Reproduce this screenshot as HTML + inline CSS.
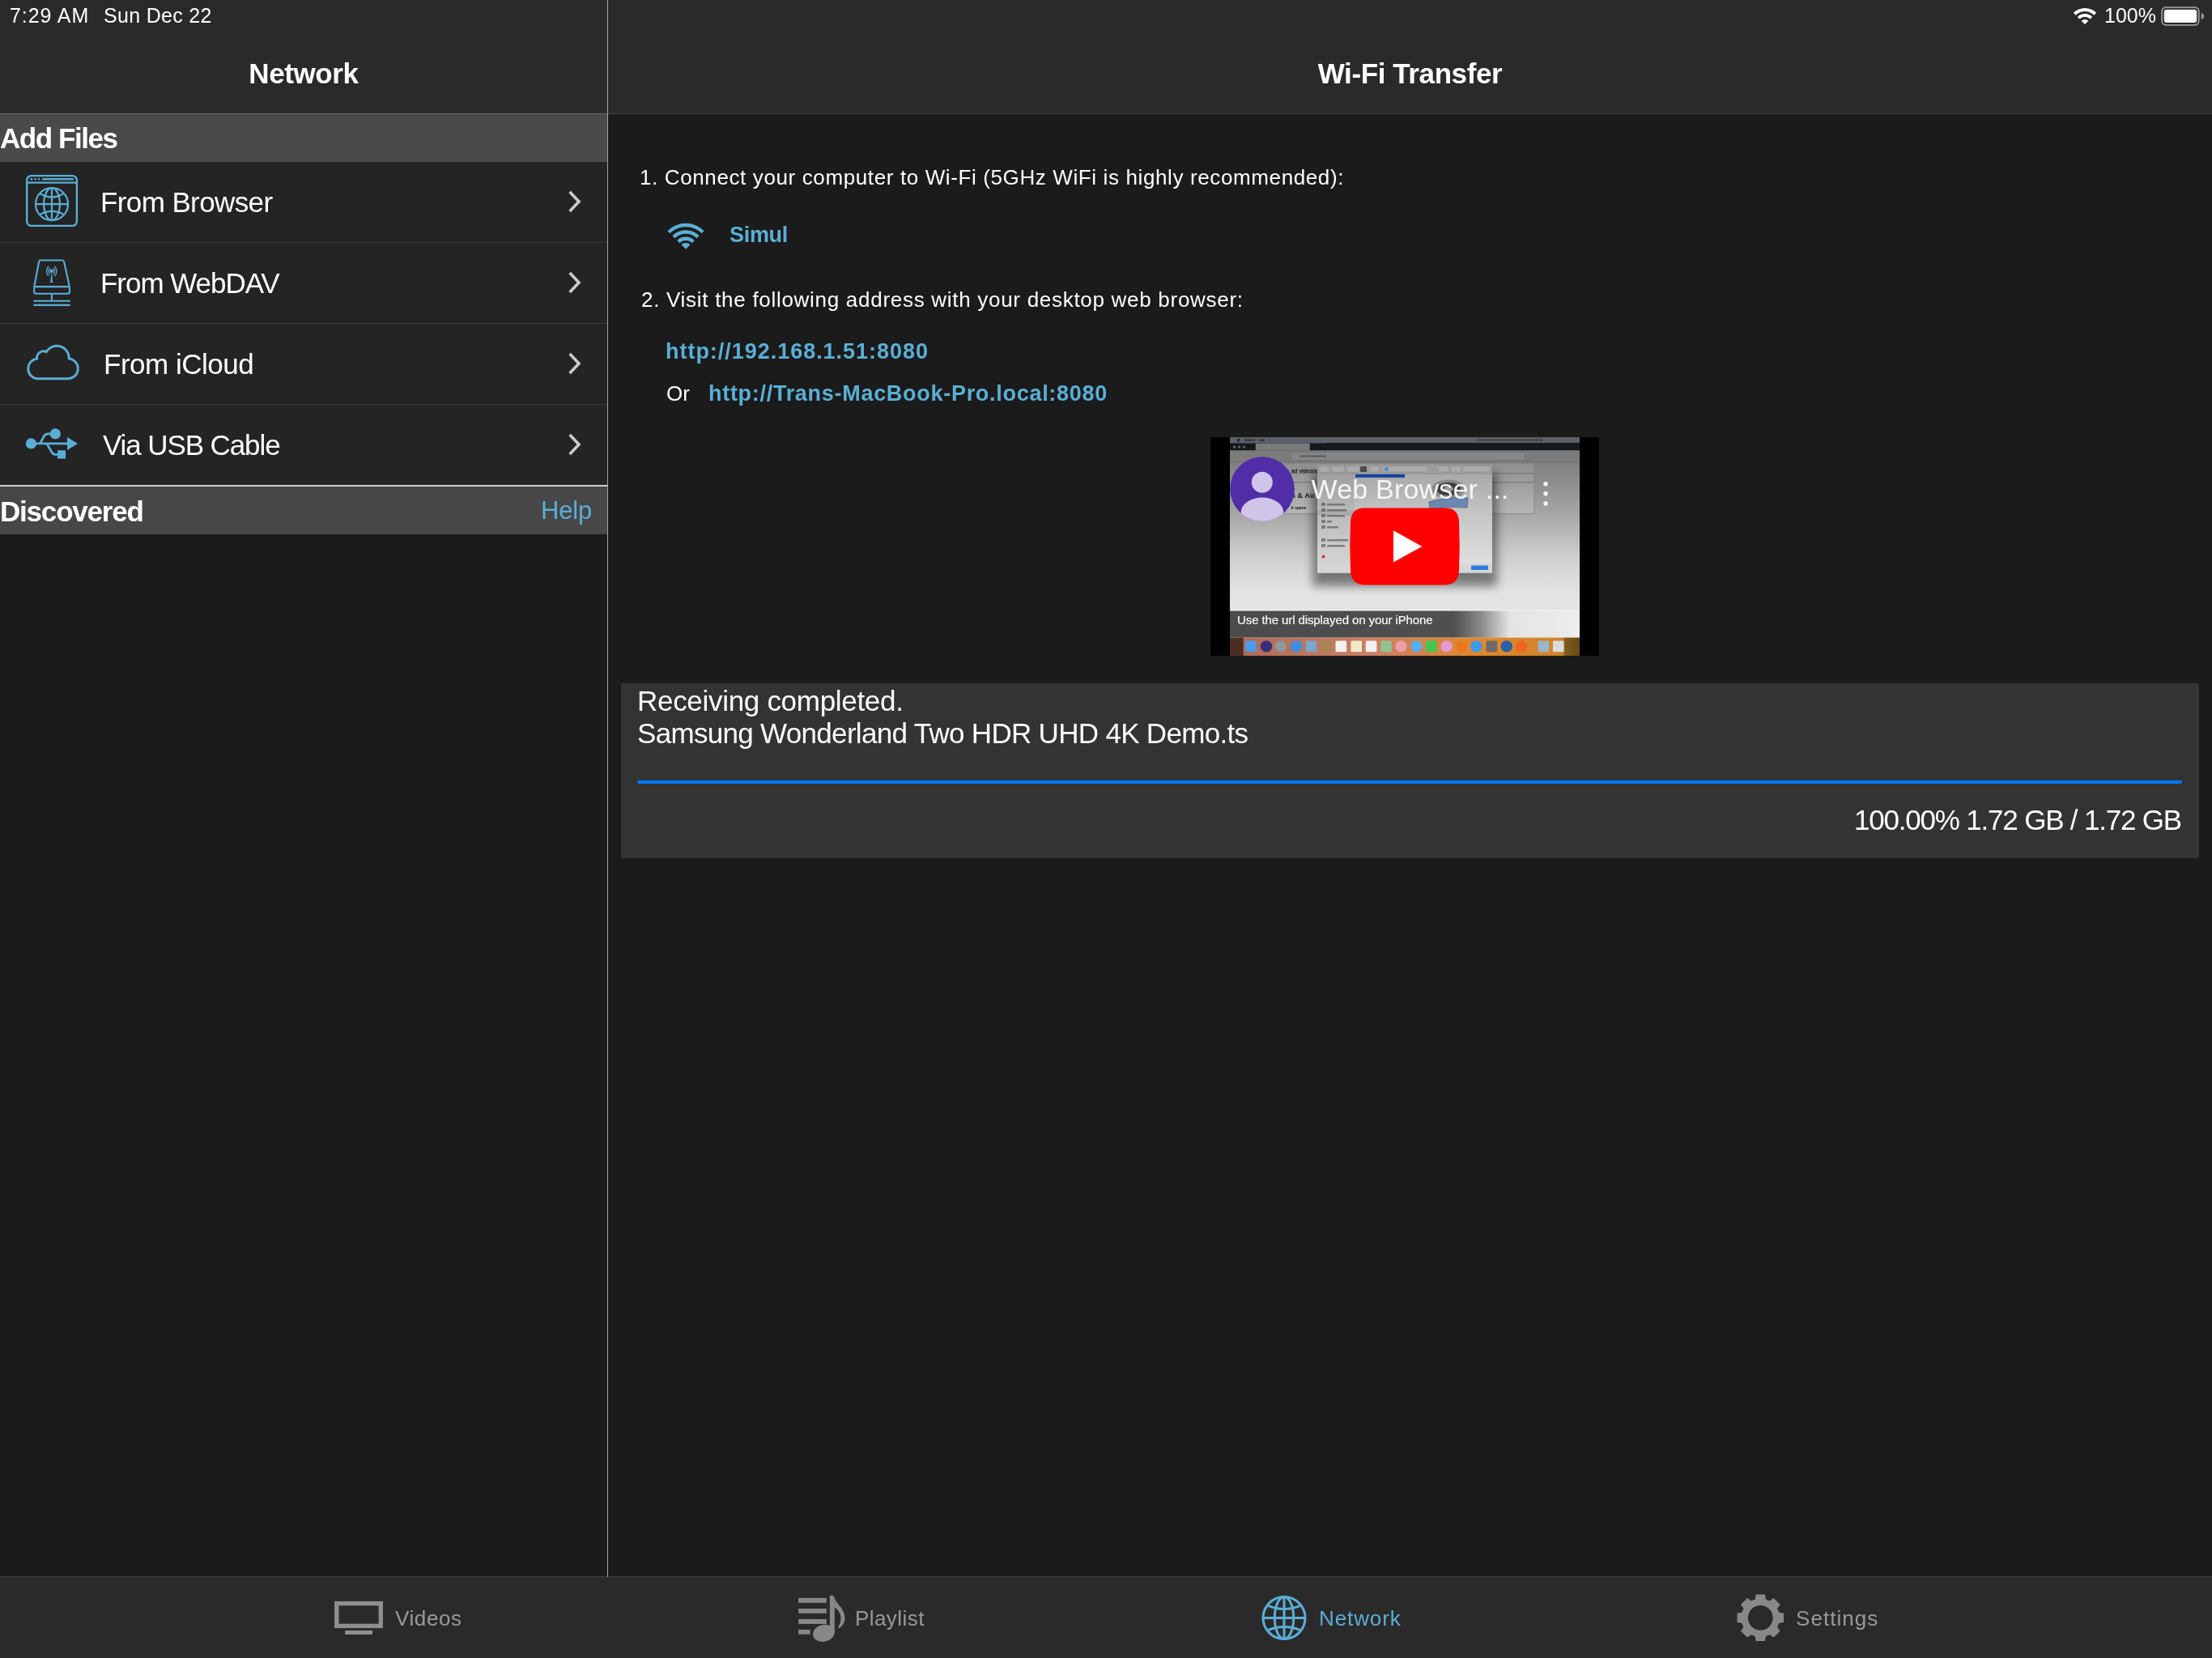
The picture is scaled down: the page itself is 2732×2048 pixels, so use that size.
<!DOCTYPE html>
<html><head><meta charset="utf-8">
<style>
*{margin:0;padding:0;box-sizing:border-box}
html,body{width:2732px;height:2048px;overflow:hidden;background:#1b1b1b;-webkit-font-smoothing:antialiased;font-family:"Liberation Sans",sans-serif;color:#fff}
.a{position:absolute}
.t{position:absolute;white-space:pre;line-height:1;will-change:transform}
#sbL{left:0;top:0;width:750px;height:140px;background:#2a2a2a}
#sbR{left:751px;top:0;width:1981px;height:140px;background:#2a2a2a}
#vline{left:750px;top:0;width:1px;height:1948px;background:#a5a5a8}
#navlineL{left:0;top:140px;width:750px;height:1px;background:#686868}
#navlineR{left:751px;top:140px;width:1981px;height:1px;background:#444}
#hdr1{left:0;top:141px;width:750px;height:59px;background:#4a4a4a}
#rows{left:0;top:200px;width:750px;height:400px;background:#242424}
.sep{position:absolute;left:0;width:750px;height:1px;background:#3a3a3a}
#wline{left:0;top:599px;width:750px;height:2px;background:#cfcfcf}
#hdr2{left:0;top:601px;width:750px;height:59px;background:#474747}
#box{left:767px;top:844px;width:1949px;height:216px;background:#333}
#prog{left:787px;top:964px;width:1908px;height:4px;border-radius:2px;background:#007aff}
#tab{left:0;top:1948px;width:2732px;height:100px;background:#2a2a2a}
#tabline{left:0;top:1947px;width:2732px;height:1px;background:#3d3d3d}
.blue{color:#5aafd6}
</style></head><body>
<div class="a" id="sbL"></div>
<div class="a" id="sbR"></div>
<div class="a" id="navlineL"></div>
<div class="a" id="navlineR"></div>
<div class="a" id="hdr1"></div>
<div class="a" id="rows"></div>
<div class="sep" style="top:299px"></div>
<div class="sep" style="top:399px"></div>
<div class="sep" style="top:499px"></div>
<div class="a" id="wline"></div>
<div class="a" id="hdr2"></div>
<div class="a" id="box"></div>
<div class="a" id="prog"></div>
<div class="a" id="tabline"></div>
<div class="a" id="tab"></div>
<div class="a" id="vline"></div>

<!-- status bar -->
<div class="t" style="left:12px;top:7px;font-size:25px;letter-spacing:0.93px">7:29 AM</div>
<div class="t" style="left:128px;top:7px;font-size:25px;letter-spacing:0.3px">Sun Dec 22</div>
<div class="t" style="left:2599px;top:7px;font-size:25px">100%</div>

<!-- titles -->
<div class="t" style="left:0;width:750px;text-align:center;top:72.5px;font-size:35px;font-weight:700;letter-spacing:-0.4px">Network</div>
<div class="t" style="left:751px;width:1981px;text-align:center;top:72.5px;font-size:35px;font-weight:700;letter-spacing:-0.4px">Wi-Fi Transfer</div>

<!-- sidebar -->
<div class="t" style="left:0;top:153px;font-size:35px;font-weight:700;letter-spacing:-1.45px">Add Files</div>
<div class="t" style="left:124px;top:232px;font-size:35px;letter-spacing:-0.6px">From Browser</div>
<div class="t" style="left:124px;top:332px;font-size:35px;letter-spacing:-1.04px">From WebDAV</div>
<div class="t" style="left:128px;top:432px;font-size:35px;letter-spacing:-0.5px">From iCloud</div>
<div class="t" style="left:126.5px;top:532px;font-size:35px;letter-spacing:-1.1px">Via USB Cable</div>
<div class="t" style="left:0;top:614px;font-size:35px;font-weight:700;letter-spacing:-1.2px">Discovered</div>
<div class="t blue" style="left:668px;top:615px;font-size:31px;letter-spacing:-0.2px">Help</div>

<!-- content -->
<div class="t" style="left:790px;top:206px;font-size:26px;letter-spacing:0.62px">1. Connect your computer to Wi-Fi (5GHz WiFi is highly recommended):</div>
<div class="t blue" style="left:901px;top:277px;font-size:27px;font-weight:700;letter-spacing:-0.3px">Simul</div>
<div class="t" style="left:791.5px;top:357px;font-size:26px;letter-spacing:0.71px">2. Visit the following address with your desktop web browser:</div>
<div class="t blue" style="left:822px;top:421px;font-size:27px;font-weight:700;letter-spacing:0.97px">http://192.168.1.51:8080</div>
<div class="t" style="left:823px;top:473px;font-size:26px">Or</div>
<div class="t blue" style="left:875px;top:473px;font-size:27px;font-weight:700;letter-spacing:0.71px">http://Trans-MacBook-Pro.local:8080</div>

<div class="t" style="left:787px;top:847.5px;font-size:35px;letter-spacing:-0.3px">Receiving completed.</div>
<div class="t" style="left:787px;top:888px;font-size:35px;letter-spacing:-0.69px">Samsung Wonderland Two HDR UHD 4K Demo.ts</div>
<div class="t" style="right:38px;top:995px;font-size:35px;letter-spacing:-1.2px">100.00% 1.72 GB / 1.72 GB</div>

<!-- tab bar labels -->
<div class="t" style="left:488px;top:1986px;font-size:26px;color:#999;letter-spacing:0.6px">Videos</div>
<div class="t" style="left:1056px;top:1986px;font-size:26px;color:#999;letter-spacing:0.43px">Playlist</div>
<div class="t blue" style="left:1629px;top:1986px;font-size:26px;letter-spacing:0.9px">Network</div>
<div class="t" style="left:2218px;top:1986px;font-size:26px;color:#999;letter-spacing:1.05px">Settings</div>


<!-- sidebar icons -->
<svg class="a" style="left:28px;top:212px" width="72" height="72" viewBox="0 0 72 72" fill="none" stroke="#5aaed6">
<rect x="5.2" y="5.1" width="61.7" height="61.8" rx="5.5" stroke-width="2.4"/>
<line x1="5" y1="13.7" x2="67" y2="13.7" stroke-width="2.3"/>
<circle cx="10.9" cy="9.3" r="1.5" fill="#5aaed6" stroke="none"/>
<circle cx="15.7" cy="9.3" r="1.2" fill="#5aaed6" stroke="none"/>
<circle cx="20" cy="9.3" r="1.2" fill="#5aaed6" stroke="none"/>
<line x1="25.2" y1="9.3" x2="61.9" y2="9.3" stroke-width="2.4" stroke-linecap="round"/>
<g stroke-width="2.2">
<circle cx="36" cy="40.2" r="20"/>
<ellipse cx="36" cy="40.2" rx="9.9" ry="20"/>
<line x1="36" y1="20.2" x2="36" y2="60.2"/>
<line x1="16" y1="40.2" x2="56" y2="40.2"/>
<path d="M21.3,27 Q36,36 50.6,27"/>
<path d="M21.7,52.8 Q36,45 50.4,52.8"/>
</g>
</svg>
<svg class="a" style="left:34px;top:316px" width="60" height="68" viewBox="0 0 60 68" fill="none" stroke="#5aaed6" stroke-width="2.1" stroke-linejoin="round">
<path d="M16.2,5.5 L42.9,5.5 Q44.6,5.5 45.1,7.3 L51.5,36.5 Q51.9,38.1 51.9,40 L51.9,44.2 Q51.9,46.8 49.3,46.8 L10.8,46.8 Q8.2,46.8 8.2,44.2 L8.2,40 Q8.2,38.1 8.6,36.5 L14.1,7.3 Q14.5,5.5 16.2,5.5 Z"/>
<line x1="8.4" y1="38.1" x2="51.7" y2="38.1"/>
<line x1="29.9" y1="46.8" x2="29.9" y2="55.8"/>
<line x1="7.4" y1="55.8" x2="52.7" y2="55.8"/>
<line x1="7.4" y1="60.9" x2="52.7" y2="60.9"/>
<circle cx="29.7" cy="18.7" r="2.2" fill="#5aaed6" stroke="none"/>
<path d="M29.7,19 L31.2,32.9 L28.2,32.9 Z" fill="#5aaed6" stroke="none"/>
<g stroke-width="1.3" stroke-linecap="round">
<path d="M27.4,15.4 Q24.6,18.9 27.4,22.4"/>
<path d="M25.6,13.3 Q21.4,18.95 25.6,24.6"/>
<path d="M32,15.4 Q34.8,18.9 32,22.4"/>
<path d="M33.8,13.3 Q38,18.95 33.8,24.6"/>
</g>
</svg>
<svg class="a" style="left:28px;top:418px" width="76" height="60" viewBox="0 0 76 60" fill="none" stroke="#5aaed6" stroke-width="2.9">
<path d="M19.5,49.8 A12.4,12.4 0 0 1 17.6,25.1 A8.3,8.3 0 0 1 29.3,16.6 A15,15 0 0 1 57.2,24.9 A12.5,12.5 0 0 1 56.5,49.8 Z"/>
</svg>
<svg class="a" style="left:28px;top:524px" width="72" height="48" viewBox="0 0 72 48" fill="#5aaed6">
<circle cx="10.4" cy="23.9" r="6.6"/>
<circle cx="40.3" cy="11.95" r="6.6"/>
<rect x="16" y="22.5" width="40" height="2.8"/>
<path d="M55,15.95 L68,23.9 L55,32.1 Z"/>
<rect x="43" y="32.2" width="10.1" height="10.4" rx="0.8"/>
<path d="M21.5,23.9 L26.5,14.5 Q28,11.9 31.5,11.9 L36,11.9" fill="none" stroke="#5aaed6" stroke-width="2.8"/>
<path d="M29.8,23.9 L35.8,34.2 Q37.6,37.4 41,37.4 L44,37.4" fill="none" stroke="#5aaed6" stroke-width="2.8"/>
</svg>
<!-- chevrons -->
<svg class="a" style="left:690px;top:225px" width="40" height="50" viewBox="0 0 40 50" fill="none" stroke="#cbcbd0" stroke-width="3.6" stroke-linecap="butt" stroke-linejoin="miter"><path d="M13.7,12.1 L25,24 L13.7,35.9"/></svg>
<svg class="a" style="left:690px;top:325px" width="40" height="50" viewBox="0 0 40 50" fill="none" stroke="#cbcbd0" stroke-width="3.6" stroke-linecap="butt" stroke-linejoin="miter"><path d="M13.7,12.1 L25,24 L13.7,35.9"/></svg>
<svg class="a" style="left:690px;top:425px" width="40" height="50" viewBox="0 0 40 50" fill="none" stroke="#cbcbd0" stroke-width="3.6" stroke-linecap="butt" stroke-linejoin="miter"><path d="M13.7,12.1 L25,24 L13.7,35.9"/></svg>
<svg class="a" style="left:690px;top:525px" width="40" height="50" viewBox="0 0 40 50" fill="none" stroke="#cbcbd0" stroke-width="3.6" stroke-linecap="butt" stroke-linejoin="miter"><path d="M13.7,12.1 L25,24 L13.7,35.9"/></svg>

<!-- simul wifi -->
<svg class="a" style="left:818px;top:270px" width="60" height="44" viewBox="0 0 60 44" fill="#5aaed6">
<path d="M6.37,15.17A32,32 0 0 1 51.63,15.17L48.52,18.28A27.6,27.6 0 0 0 9.48,18.28Z"/>
<path d="M12.31,21.11A23.6,23.6 0 0 1 45.69,21.11L42.51,24.29A19.1,19.1 0 0 0 15.49,24.29Z"/>
<path d="M18.18,26.98A15.3,15.3 0 0 1 39.82,26.98L36.57,30.23A10.7,10.7 0 0 0 21.43,30.23Z"/>
<path d="M29,37.8L23.56,32.36A7.7,7.7 0 0 1 34.44,32.36Z"/>
</svg>

<!-- status bar icons -->
<svg class="a" style="left:2555px;top:4px" width="40" height="32" viewBox="0 0 40 32" fill="#fff">
<path d="M5.86,11.86A20,20 0 0 1 34.14,11.86L31.31,14.69A16,16 0 0 0 8.69,14.69Z"/>
<path d="M10.88,16.88A12.9,12.9 0 0 1 29.12,16.88L26.51,19.49A9.2,9.2 0 0 0 13.49,19.49Z"/>
<path d="M20,26L15.69,21.69A6.1,6.1 0 0 1 24.31,21.69Z"/>
</svg>
<svg class="a" style="left:2664px;top:4px" width="64" height="32" viewBox="0 0 64 32">
<rect x="6.25" y="5.2" width="45.4" height="21.6" rx="5" fill="#181818" stroke="#8c8c8c" stroke-width="2.3"/>
<rect x="8.8" y="7.8" width="40.4" height="16.2" rx="3" fill="#fff"/>
<path d="M54.8,11.9 Q58,13 58,16 Q58,19 54.8,20.1 Z" fill="#9a9a9a"/>
</svg>


<!-- video thumbnail -->
<svg class="a" style="left:1495px;top:540px;will-change:transform" width="480" height="270" viewBox="0 0 480 270">
<defs>
<linearGradient id="pg" x1="0" y1="0" x2="0" y2="1">
<stop offset="0" stop-color="#6e6e6e"/><stop offset="0.11" stop-color="#808080"/><stop offset="0.2" stop-color="#8c8c8c"/><stop offset="0.35" stop-color="#a6a6a6"/><stop offset="0.55" stop-color="#cfcfcf"/><stop offset="0.7" stop-color="#e2e2e2"/><stop offset="1" stop-color="#ebebeb"/>
</linearGradient>
<linearGradient id="bg2" x1="0" y1="0" x2="0" y2="1">
<stop offset="0" stop-color="#8e8e8e"/><stop offset="1" stop-color="#b6b6b6"/>
</linearGradient>
<linearGradient id="dg" x1="0" y1="0" x2="0" y2="1">
<stop offset="0" stop-color="#a2a2a2"/><stop offset="0.5" stop-color="#c8c8c8"/><stop offset="1" stop-color="#e4e4e4"/>
</linearGradient>
<linearGradient id="cg" x1="0" y1="0" x2="1" y2="0">
<stop offset="0" stop-color="#4b4b4b"/><stop offset="0.64" stop-color="#4f4f4f"/><stop offset="0.72" stop-color="#8c8c8c"/><stop offset="0.80" stop-color="#e4e4e4"/><stop offset="1" stop-color="#ededed"/>
</linearGradient>
<linearGradient id="dk" x1="0" y1="0" x2="1" y2="0">
<stop offset="0" stop-color="#4a2e26"/><stop offset="0.037" stop-color="#4a2e26"/><stop offset="0.04" stop-color="#b06a58"/><stop offset="0.4" stop-color="#c98063"/><stop offset="0.7" stop-color="#e2882e"/><stop offset="0.95" stop-color="#d08428"/><stop offset="0.96" stop-color="#7a5a20"/><stop offset="1" stop-color="#6a4a18"/>
</linearGradient>
<clipPath id="av"><circle cx="64" cy="64" r="40"/></clipPath>
<filter id="sh" x="-30%" y="-30%" width="160%" height="180%"><feGaussianBlur stdDeviation="6"/></filter>
</defs>
<rect width="480" height="270" fill="#000"/>
<rect x="24" y="0" width="432" height="270" fill="url(#pg)"/>
<rect x="24" y="0" width="432" height="7" fill="#5a6065"/>
<rect x="33" y="2" width="3" height="3.5" fill="#222"/><rect x="42" y="2.3" width="13" height="2.6" fill="#3a3a3a"/><rect x="60" y="2.3" width="7" height="2.6" fill="#3a3a3a"/>
<rect x="330" y="2.3" width="80" height="2.6" fill="#3e4245" opacity="0.8"/>
<rect x="24" y="7" width="432" height="9.5" fill="#15191c"/>
<rect x="55.8" y="7.5" width="67" height="9" fill="#7a7a7a"/><rect x="24" y="6.6" width="120" height="0.8" fill="#4a6a8a"/>
<circle cx="29.5" cy="12" r="1.6" fill="#6a6a6a"/><circle cx="35.5" cy="12" r="1.6" fill="#6a6a6a"/><circle cx="41.5" cy="12" r="1.6" fill="#6a6a6a"/>
<rect x="24" y="16.5" width="432" height="13.5" fill="#7c7c7c"/>
<rect x="100" y="18.5" width="289" height="10" rx="1.5" fill="#878787" stroke="#6a6a6a" stroke-width="0.6"/>
<rect x="110" y="22.3" width="33" height="2.6" fill="#555" opacity="0.7"/>
<rect x="24" y="30" width="432" height="2" fill="#777"/>
<rect x="88" y="32" width="312" height="62.5" fill="url(#bg2)" stroke="#808080" stroke-width="0.8"/>
<rect x="88" y="44.3" width="312" height="1" fill="#6e6e6e"/>
<rect x="88" y="55.2" width="312" height="1" fill="#6e6e6e"/>
<text x="100" y="43.5" font-family="Liberation Sans" font-weight="700" font-size="6.5" fill="#151515">ad video/audio</text>
<text x="100" y="75" font-family="Liberation Sans" font-weight="700" font-size="9" fill="#151515">s &amp; Au</text>
<text x="100" y="89" font-family="Liberation Sans" font-weight="700" font-size="5" fill="#151515">k space</text>
<rect x="126" y="44" width="228" height="140" fill="#000" opacity="0.45" filter="url(#sh)"/>
<rect x="132" y="34" width="216" height="133.5" fill="url(#dg)"/>
<rect x="132" y="34" width="216" height="10.8" fill="#9c9c9c"/>
<rect x="132" y="44.8" width="216" height="0.6" fill="#888"/><g fill="#ababab" stroke="#8a8a8a" stroke-width="0.4">
<rect x="135" y="36" width="12" height="7" rx="1.2"/><rect x="150" y="36" width="15" height="7" rx="1.2"/><rect x="168.5" y="36" width="15.3" height="7" rx="1.2"/>
<rect x="197.8" y="36" width="10.6" height="7" rx="1.2"/><rect x="212.5" y="36" width="55.3" height="7" rx="1.2"/>
<rect x="281.9" y="36" width="12.3" height="7" rx="1.2"/><rect x="297" y="36" width="12.5" height="7" rx="1.2"/><rect x="312" y="36" width="33.4" height="7" rx="1.2"/>
</g><rect x="185" y="36" width="8" height="7" rx="1" fill="#4a4a4a"/><rect x="215" y="37.5" width="5" height="4" fill="#4a90c8"/>
<rect x="132" y="45.4" width="46" height="110.6" fill="#000" opacity="0.05"/>
<rect x="132" y="90" width="46" height="7" fill="#000" opacity="0.08"/>
<g fill="#444" opacity="0.55">
<rect x="137" y="81" width="5" height="4"/><rect x="144" y="82" width="22" height="2.5"/>
<rect x="137" y="88" width="5" height="4"/><rect x="144" y="89" width="24" height="2.5"/>
<rect x="137" y="95" width="5" height="4"/><rect x="144" y="96" width="22" height="2.5"/>
<rect x="137" y="102" width="5" height="4"/><rect x="144" y="103" width="6" height="2.5"/>
<rect x="137" y="109" width="5" height="4"/><rect x="144" y="110" width="14" height="2.5"/>
<rect x="137" y="125" width="5" height="4"/><rect x="144" y="126" width="26" height="2.5"/>
<rect x="137" y="132" width="5" height="4"/><rect x="144" y="133" width="22" height="2.5"/>
<rect x="144" y="157.5" width="22" height="2.5"/>
</g>
<circle cx="139.5" cy="147.5" r="2" fill="#d0304a"/>
<rect x="132" y="156" width="216" height="11.5" fill="#d6d6d6"/>
<rect x="179" y="45.8" width="61" height="4" fill="#12449a"/>
<rect x="322" y="158.5" width="21" height="5.5" rx="1" fill="#2a7ae0"/>
<ellipse cx="294" cy="64" rx="21" ry="11.5" fill="#8a8a8a"/><ellipse cx="294" cy="64" rx="15" ry="8" fill="#3e3e3e"/><ellipse cx="294" cy="64" rx="6" ry="3.5" fill="#9a9a9a"/>
<path d="M270,80 Q294,73 318,75 L317,87 Q294,85 271,89 Z" fill="#6a88b0" stroke="#3a4a5a" stroke-width="0.6"/>
<rect x="24" y="213.6" width="432" height="1" fill="#f4f4f4"/>
<rect x="24" y="214.6" width="432" height="33" fill="url(#cg)"/>
<rect x="24" y="247.6" width="432" height="22.4" fill="url(#dk)"/>
<rect x="43.2" y="251.6" width="13.6" height="13.6" rx="1.5" fill="#4a9be8"/><circle cx="69.0" cy="258.4" r="7.2" fill="#3a2f7a"/><circle cx="87.0" cy="258.4" r="7.2" fill="#8f969c"/><circle cx="106.0" cy="258.4" r="7.2" fill="#3f8ee0"/><rect x="117.7" y="251.6" width="13.6" height="13.6" rx="1.5" fill="#7aa6d0"/><rect x="136.6" y="251.6" width="13.6" height="13.6" rx="1.5" fill="#a88454"/><rect x="154.5" y="251.6" width="13.6" height="13.6" rx="1.5" fill="#f2f2f2"/><rect x="173.4" y="251.6" width="13.6" height="13.6" rx="1.5" fill="#efe9c8"/><rect x="191.8" y="251.6" width="13.6" height="13.6" rx="1.5" fill="#f0f0f0"/><rect x="210.2" y="251.6" width="13.6" height="13.6" rx="1.5" fill="#8fc490"/><circle cx="235.4" cy="258.4" r="7.2" fill="#e9a0a8"/><circle cx="254.4" cy="258.4" r="7.2" fill="#58aef0"/><rect x="265.9" y="251.6" width="13.6" height="13.6" rx="1.5" fill="#43c655"/><circle cx="291.7" cy="258.4" r="7.2" fill="#e59ad8"/><circle cx="310.0" cy="258.4" r="7.2" fill="#e8781e"/><circle cx="328.4" cy="258.4" r="7.2" fill="#3f9af0"/><rect x="340.6" y="251.6" width="13.6" height="13.6" rx="1.5" fill="#6a6a6a"/><circle cx="365.8" cy="258.4" r="7.2" fill="#2a5fa8"/><circle cx="384.0" cy="258.4" r="7.2" fill="#f06420"/><rect x="404.5" y="251.6" width="13.6" height="13.6" rx="1.5" fill="#9bb4d0"/><rect x="422.9" y="251.6" width="13.6" height="13.6" rx="1.5" fill="#dcdcdc"/>
<g clip-path="url(#av)">
<circle cx="64" cy="64" r="40" fill="#512da8"/>
<circle cx="63.8" cy="55.8" r="13" fill="#d1c4e9"/>
<ellipse cx="64" cy="93" rx="26.4" ry="18.4" fill="#d1c4e9"/>
</g>
<text x="124.5" y="76.4" font-family="Liberation Sans" font-size="34" fill="#f6f6f6" letter-spacing="0.2">Web Browser ...</text>
<circle cx="414" cy="57.7" r="2.7" fill="#f6f6f6"/>
<circle cx="414" cy="69.8" r="2.7" fill="#f6f6f6"/>
<circle cx="414" cy="82" r="2.7" fill="#f6f6f6"/>
<path d="M190,87.5 L290,87.5 Q306,87.5 307,104 Q308.5,134.5 307,165 Q306,182 290,182.5 L190,182.5 Q174,182 173,165 Q171.5,134.5 173,104 Q174,87.5 190,87.5 Z" fill="#ff0000"/>
<path d="M226,115.2 L261.3,135 L226,154.6 Z" fill="#fff"/>
<text x="33" y="231.2" font-family="Liberation Sans" font-size="15" fill="#fafafa" stroke="#fafafa" stroke-width="0.2" letter-spacing="-0.1">Use the url displayed on your iPhone</text>
</svg>

<!-- tab icons -->
<svg class="a" style="left:400px;top:1962px" width="90" height="72" viewBox="0 0 90 72" fill="#8e8e8e">
<rect x="15.8" y="18.6" width="54.5" height="27.8" fill="none" stroke="#8e8e8e" stroke-width="5.4"/>
<rect x="26.2" y="52" width="33.8" height="5"/>
</svg>
<svg class="a" style="left:980px;top:1962px" width="70" height="72" viewBox="0 0 70 72" fill="#888">
<rect x="6.1" y="11.9" width="34.7" height="5.9"/>
<rect x="6.1" y="25" width="34.7" height="5.8"/>
<rect x="6.1" y="38" width="34.7" height="5.9"/>
<rect x="6.1" y="51" width="14.5" height="5.7"/>
<ellipse cx="37.3" cy="55.4" rx="13.4" ry="10.4" transform="rotate(-12 37.3 55.4)"/>
<path d="M44.9,10.5 Q44.9,8.6 46.9,8.6 Q49.5,8.6 50.8,11.5 L50.8,56 L44.9,56 Z"/>
<path d="M50.3,11 C52,16 56,20 59,24 C62,28 63.5,33 63.5,37.5 C63.5,42 61,46 56.5,49.3 L54.6,48.2 C57.5,45 58.5,41 58.5,37.5 C58.5,31 55.5,26.5 50.8,23.8 Z"/>
</svg>
<svg class="a" style="left:1550px;top:1962px" width="72" height="72" viewBox="0 0 72 72" fill="none" stroke="#5aaed6" stroke-width="3">
<circle cx="36" cy="36.5" r="26"/>
<ellipse cx="36" cy="36.5" rx="11.7" ry="26"/>
<line x1="36" y1="10.5" x2="36" y2="62.5"/>
<line x1="10" y1="36.5" x2="62" y2="36.5"/>
<path d="M16.1,21.3 Q36,29.5 56,21.3"/>
<path d="M16.5,51.5 Q36,43.7 55.6,51.5"/>
</svg>
<svg class="a" style="left:2138px;top:1962px" width="72" height="72" viewBox="0 0 72 72">
<path fill="#888" fill-rule="evenodd" d="M29.70,13.43 L30.65,7.55 L41.95,7.55 L42.90,13.43 L47.80,15.46 L52.63,11.98 L60.62,19.97 L57.14,24.80 L59.17,29.70 L65.05,30.65 L65.05,41.95 L59.17,42.90 L57.14,47.80 L60.62,52.63 L52.63,60.62 L47.80,57.14 L42.90,59.17 L41.95,65.05 L30.65,65.05 L29.70,59.17 L24.80,57.14 L19.97,60.62 L11.98,52.63 L15.46,47.80 L13.43,42.90 L7.55,41.95 L7.55,30.65 L13.43,29.70 L15.46,24.80 L11.98,19.97 L19.97,11.98 L24.80,15.46Z M51.7,36.3 A15.4,15.4 0 1 0 20.9,36.3 A15.4,15.4 0 1 0 51.7,36.3Z"/>
</svg>

</body></html>
